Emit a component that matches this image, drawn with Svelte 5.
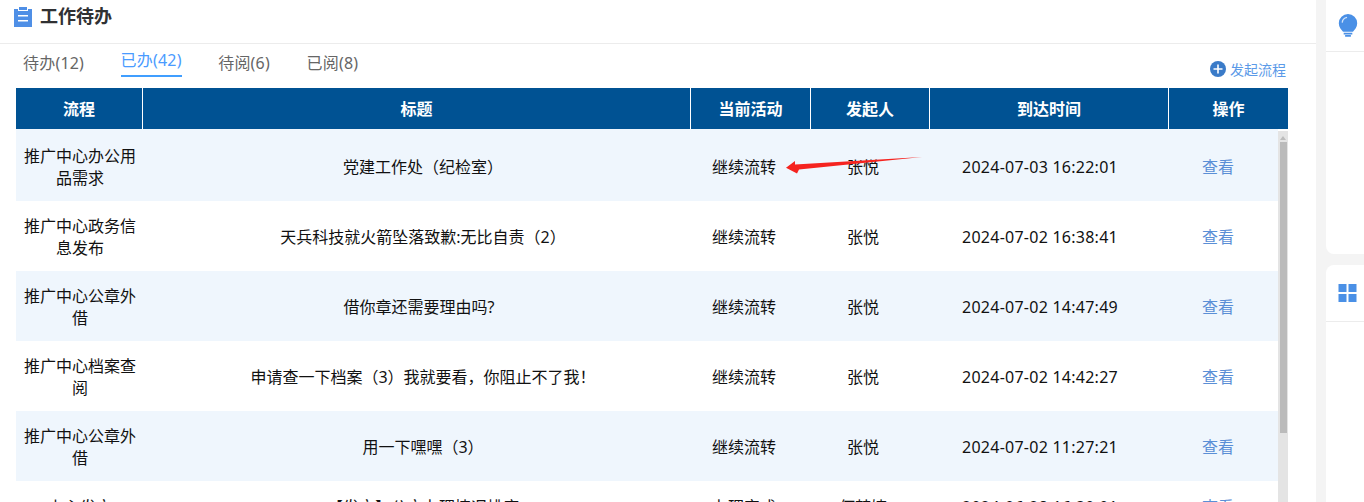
<script lang="ts">
	const tabs = [
		{ label: "待办(12)", active: false },
		{ label: "已办(42)", active: true },
		{ label: "待阅(6)", active: false },
		{ label: "已阅(8)", active: false }
	];

	const headers = ["流程", "标题", "当前活动", "发起人", "到达时间", "操作"];

	const rows = [
		{ flow: "推广中心办公用品需求", title: "党建工作处（纪检室）", step: "继续流转", user: "张悦", time: "2024-07-03 16:22:01" },
		{ flow: "推广中心政务信息发布", title: "天兵科技就火箭坠落致歉:无比自责（2）", step: "继续流转", user: "张悦", time: "2024-07-02 16:38:41" },
		{ flow: "推广中心公章外借", title: "借你章还需要理由吗?", step: "继续流转", user: "张悦", time: "2024-07-02 14:47:49" },
		{ flow: "推广中心档案查阅", title: "申请查一下档案（3）我就要看，你阻止不了我！", step: "继续流转", user: "张悦", time: "2024-07-02 14:42:27" },
		{ flow: "推广中心公章外借", title: "用一下嘿嘿（3）", step: "继续流转", user: "张悦", time: "2024-07-02 11:27:21" },
		{ flow: "上心发文", title: "【发文】公文办理情况排序", step: "办理完成", user: "何梦婕", time: "2024-06-28 16:30:01" }
	];

	const isTrimmed = (title: string) => /^【|[）！]$/.test(title);
</script>

<div class="page">
	<main class="panel">
		<header class="title-bar">
			<svg class="clip" viewBox="0 0 18 20" width="18" height="20">
				<path d="M0 2h4v2h10V2h4v18H0z M5 0h8v3H5z M4 8v1.6h10V8z M4 13v1.6h10V13z" fill="#4f8fe6" fill-rule="evenodd" />
			</svg>
			<h1>工作待办</h1>
		</header>

		<div class="tabs-row">
			<nav class="tabs">
				{#each tabs as tab}
					<span class="tab" class:active={tab.active}>{tab.label}</span>
				{/each}
			</nav>
			<a class="start" href="#start">
				<svg viewBox="0 0 16 16" width="16" height="16">
					<circle cx="8" cy="8" r="8" fill="#3a7bc8" />
					<path d="M3.5 8h9M8 3.5v9" stroke="#fff" stroke-width="1.6" />
				</svg>
				发起流程
			</a>
		</div>

		<div class="table">
			<div class="thead">
				{#each headers as h}
					<div class="th">{h}</div>
				{/each}
			</div>
			<div class="tbody">
				<div class="rows">
					{#each rows as row}
						<div class="row">
							<div class="cell flow"><span>{row.flow}</span></div>
							<div class="cell" class:trimmed={isTrimmed(row.title)}>{row.title}</div>
							<div class="cell">{row.step}</div>
							<div class="cell">{row.user}</div>
							<div class="cell time">{row.time}</div>
							<div class="cell link">查看</div>
						</div>
					{/each}
				</div>
				<div class="scrollbar">
					<i class="up"></i>
					<i class="thumb"></i>
				</div>
			</div>
		</div>

		<svg class="arrow" viewBox="0 0 140 20" width="140" height="20">
			<path d="M1 11.7 L10 5 L10 8.500 L137 1 L14 13.500 L12 17.500 Z" fill="#f5231f" />
		</svg>
	</main>

	<aside class="side">
		<section class="card first">
			<div class="card-head">
				<svg viewBox="0 0 20 24" width="20" height="23">
					<path d="M10 0a9.600 9.600 0 0 1 9.600 9.600c0 4-2.600 6.600-4.400 9H4.800C3 16.200.4 13.600.4 9.600A9.600 9.600 0 0 1 10 0z" fill="#4a90e6" />
					<path d="M5.500 19.500h9v1.800h-9zM7 22h6v1.800H7z" fill="#4a90e6" />
					<path d="M4 9a6 6 0 0 1 5-5.500" fill="none" stroke="#cfe2fa" stroke-width="1.400" />
				</svg>
			</div>
		</section>
		<section class="card second">
			<div class="card-head">
				<svg viewBox="0 0 18 18" width="19" height="18">
					<path d="M0 0h8v8H0zM10 0h8v8h-8zM0 10h8v8H0zM10 10h8v8h-8z" fill="#4a90e6" />
				</svg>
			</div>
		</section>
	</aside>
</div>

<style>
	:global(body) {
		margin: 0;
		overflow: hidden;
		font-family: "Noto Sans", "Noto Sans CJK SC", "Liberation Sans", sans-serif;
	}

	.page {
		display: flex;
		height: 502px;
		overflow: hidden;
		background: #f4f4f4;
	}

	.panel {
		position: relative;
		flex: 0 0 1316px;
		background: #fff;
		overflow: hidden;
	}

	.title-bar {
		display: flex;
		align-items: center;
		gap: 8px;
		height: 44px;
		padding: 0 0 11px 14px;
		box-sizing: border-box;
		border-bottom: 1px solid #ececec;
	}

	.clip {
		margin-top: 2px;
	}

	.title-bar h1 {
		margin: 0;
		font-size: 18px;
		line-height: 24px;
		font-weight: 700;
		color: #303133;
	}

	.tabs-row {
		display: flex;
		justify-content: space-between;
		height: 44px;
		padding: 0 30px 0 23px;
		box-sizing: border-box;
	}

	.tabs {
		display: flex;
		gap: 36.5px;
	}

	.tab {
		font-size: 16px;
		line-height: 22px;
		letter-spacing: 0.2px;
		padding-top: 8px;
		color: #666;
	}

	.tab.active {
		height: 26px;
		padding-top: 5px;
		color: #4a9bff;
		border-bottom: 2px solid #409eff;
	}

	.start {
		display: flex;
		align-items: center;
		gap: 4px;
		height: 20px;
		margin-top: 15px;
		font-size: 14px;
		color: #5b9ae8;
		text-decoration: none;
	}

	.table {
		margin-left: 16px;
		width: 1272px;
	}

	.thead {
		display: grid;
		grid-template-columns: 127px 548px 120px 119px 239px 119px;
		background: #005293;
	}

	.th {
		height: 41px;
		box-sizing: border-box;
		padding-bottom: 2px;
		display: flex;
		align-items: center;
		justify-content: center;
		font-size: 16px;
		font-weight: 700;
		color: #fff;
		border-right: 1px solid #fff;
	}

	.th:last-child {
		border-right: 0;
	}

	.tbody {
		display: flex;
		height: 373px;
		overflow: hidden;
	}

	.rows {
		flex: 0 0 1262px;
	}

	.row {
		display: grid;
		grid-template-columns: 138px 530px 120px 118px 236px 120px;
		height: 70px;
		background: #fff;
	}

	.row:nth-child(odd) {
		background: #eff6fd;
	}

	.row:first-child {
		height: 72px;
		box-sizing: border-box;
		padding-top: 2px;
	}

	.row:last-child {
		height: 50px;
		background: #fff;
	}

	.cell {
		display: flex;
		align-items: center;
		justify-content: center;
		text-align: center;
		box-sizing: border-box;
		padding-top: 2px;
		font-size: 16px;
		line-height: 22px;
		color: #111;
	}

	.trimmed {
		padding-left: 8px;
	}

	.flow {
		padding: 2px 17px 0 7px;
	}

	.time {
		letter-spacing: 0.25px;
	}

	.link {
		color: #5b8fd6;
	}

	.scrollbar {
		flex: 0 0 10px;
		margin-top: 2px;
		display: flex;
		flex-direction: column;
		align-items: center;
		background: #e4e4e4;
	}

	.up {
		margin-top: 5px;
		border: 3px solid transparent;
		border-top: 0;
		border-bottom: 4px solid #bcbcbc;
	}

	.thumb {
		margin-top: 2px;
		width: 7px;
		height: 291px;
		background: #bbb;
	}

	.arrow {
		position: absolute;
		left: 785px;
		top: 156px;
	}

	.side {
		flex: 0 0 38px;
		margin-left: 10px;
		display: flex;
		flex-direction: column;
		gap: 11px;
	}

	.card {
		background: #fff;
	}

	.first {
		height: 254px;
		border-bottom-left-radius: 8px;
	}

	.second {
		flex: 1;
		border-top-left-radius: 8px;
	}

	.card-head {
		box-sizing: border-box;
		display: flex;
		justify-content: flex-start;
		align-items: center;
		padding-left: 12px;
		border-bottom: 1px solid #ececec;
	}

	.first .card-head {
		height: 52px;
	}

	.second .card-head {
		height: 57px;
	}
</style>
